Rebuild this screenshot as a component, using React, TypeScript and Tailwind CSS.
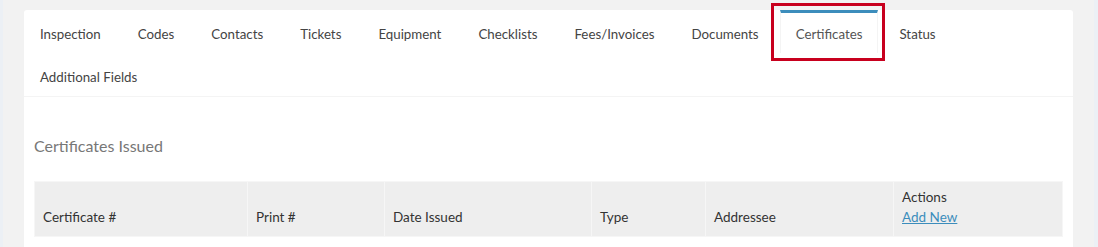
import React from 'react';

const TABS = [
  'Inspection',
  'Codes',
  'Contacts',
  'Tickets',
  'Equipment',
  'Checklists',
  'Fees/Invoices',
  'Documents',
  'Certificates',
  'Status',
  'Additional Fields',
];

const COLUMNS = [
  { label: 'Certificate #', width: 'w-[213px]' },
  { label: 'Print #', width: 'w-[137px]' },
  { label: 'Date Issued', width: 'w-[207px]' },
  { label: 'Type', width: 'w-[114px]' },
  { label: 'Addressee', width: 'w-[188px]' },
];

const Tab = ({ label, active }: { label: string; active: boolean }) => (
  <li className="relative mr-[5px]">
    <a
      href="#"
      className={`block h-[43px] px-[15px] pt-[11px] pb-[9px] border-t-[3px] border-x text-[13.3px] leading-5 ${
        active
          ? 'border-t-[#3c8dbc] border-x-[#f4f4f4] text-[#555]'
          : 'border-t-transparent border-x-transparent text-[#444]'
      }`}
    >
      {label}
    </a>
    {/* annotation box drawn over the active tab */}
    {active && (
      <span className="absolute -left-[9px] -top-[7px] -right-[7px] -bottom-[8px] border-[3px] border-[#c8001e] pointer-events-none" />
    )}
  </li>
);

export default function App() {
  return (
    <div
      className="min-h-screen h-[247px] overflow-hidden bg-[#ecf0f5] pl-[3px] pr-[4px] text-[14px]"
      style={{ fontFamily: 'Lato, "Noto Sans", sans-serif' }}
    >
      <div className="h-full bg-[#f2f2f2] pt-[10px] px-[21px]">
        <div className="bg-white rounded-t-[3px] h-full">
          {/* Tabs */}
          <ul className="flex flex-wrap">
            {TABS.map((t) => (
              <Tab key={t} label={t} active={t === 'Certificates'} />
            ))}
          </ul>
          <div className="h-px bg-[#f4f4f4]" />

          {/* Body */}
          <div className="px-[10px] pt-[37px]">
            <h3 className="text-[16px] leading-6 text-[#777]">Certificates Issued</h3>

            <table className="mt-[23px] w-full table-fixed border-collapse bg-[#eeeeee] text-[13.5px] text-[#333]">
              <thead>
                <tr className="h-[55px]">
                  {COLUMNS.map((c) => (
                    <th
                      key={c.label}
                      className={`${c.width} border border-[#f6f6f6] px-2 pb-[9px] align-bottom text-left font-normal leading-5`}
                    >
                      {c.label}
                    </th>
                  ))}
                  <th className="border border-[#f6f6f6] px-2 pb-[9px] align-bottom text-left font-normal leading-5">
                    <div>Actions</div>
                    <a href="#" className="text-[#3c8dbc] underline">
                      Add New
                    </a>
                  </th>
                </tr>
              </thead>
            </table>
          </div>
        </div>
      </div>
    </div>
  );
}
